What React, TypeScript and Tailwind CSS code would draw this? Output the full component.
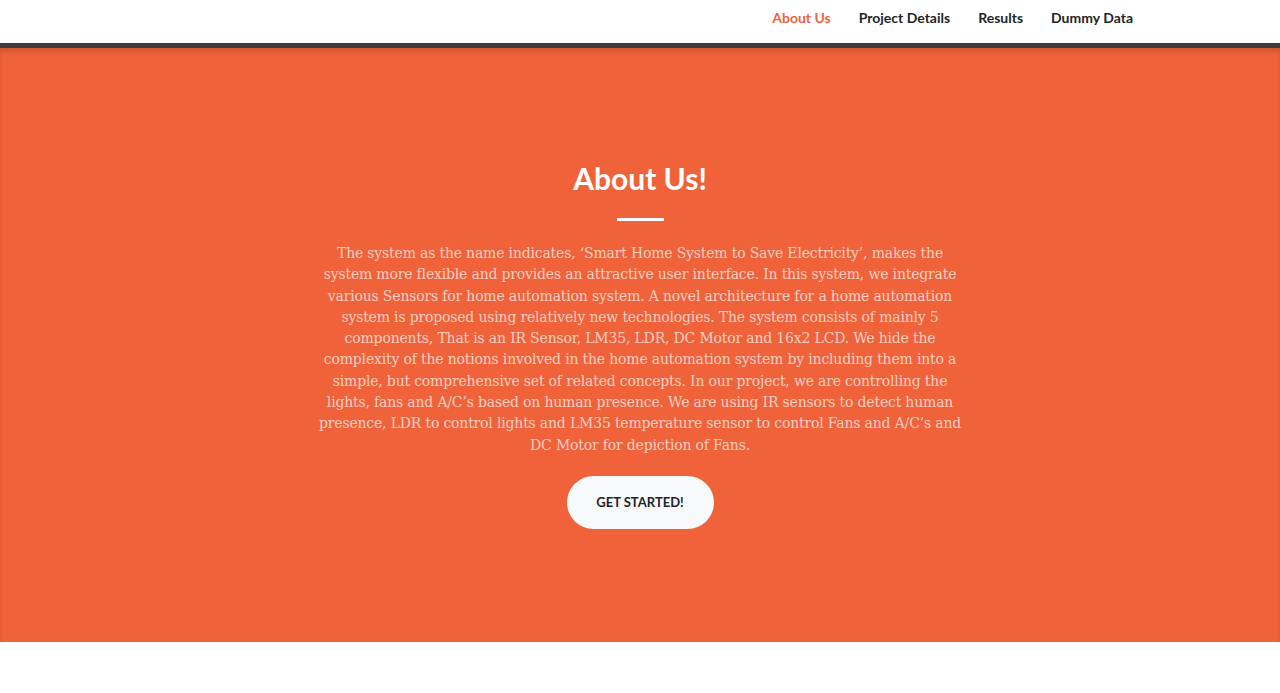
export default function App() {
  const navItems = ["About Us", "Project Details", "Results", "Dummy Data"];
  const lines = [
    "The system as the name indicates, ‘Smart Home System to Save Electricity’, makes the",
    "system more flexible and provides an attractive user interface. In this system, we integrate",
    "various Sensors for home automation system. A novel architecture for a home automation",
    "system is proposed using relatively new technologies. The system consists of mainly 5",
    "components, That is an IR Sensor, LM35, LDR, DC Motor and 16x2 LCD. We hide the",
    "complexity of the notions involved in the home automation system by including them into a",
    "simple, but comprehensive set of related concepts. In our project, we are controlling the",
    "lights, fans and A/C’s based on human presence. We are using IR sensors to detect human",
    "presence, LDR to control lights and LM35 temperature sensor to control Fans and A/C’s and",
    "DC Motor for depiction of Fans.",
  ];
  return (
    <div className="min-h-[693px] bg-white" style={{ fontFamily: "Lato, 'Open Sans', sans-serif" }}>
      <nav className="h-[43px] bg-white flex items-start justify-end pr-[147px] pt-[9px]">
        <ul className="flex items-center gap-[28px]">
          {navItems.map((n, i) => (
            <li key={n} className={`text-[14px] font-bold leading-[18px] ${i === 0 ? "text-[#f0623a]" : "text-[#212529]"}`}>
              {n}
            </li>
          ))}
        </ul>
      </nav>
      <div className="h-[5px] bg-[#403a3d]" />
      <header className="bg-[#f0623a] h-[594px] flex flex-col items-center pt-[110px] shadow-[inset_0_4px_4px_rgba(0,0,0,0.12)]">
        <h2 className="text-white text-[30px] font-bold leading-[36px] mt-[2px]">About Us!</h2>
        <hr className="w-[47px] h-[3px] bg-white border-0 mt-[22px] mb-[22px]" />
        <p
          className="w-[680px] text-center text-[14px] leading-[21.3px] tracking-[-0.18px] text-white/70"
          style={{ fontFamily: "'DejaVu Serif', 'Liberation Serif', serif" }}
        >
          {lines.map((l, i) => (
            <span key={i} className="block whitespace-nowrap">
              {l}
            </span>
          ))}
        </p>
        <button className="mt-[20px] w-[147px] h-[53px] rounded-full bg-[#f8f9fa] text-[#212529] text-[13px] font-bold uppercase">
          Get Started!
        </button>
      </header>
    </div>
  );
}
